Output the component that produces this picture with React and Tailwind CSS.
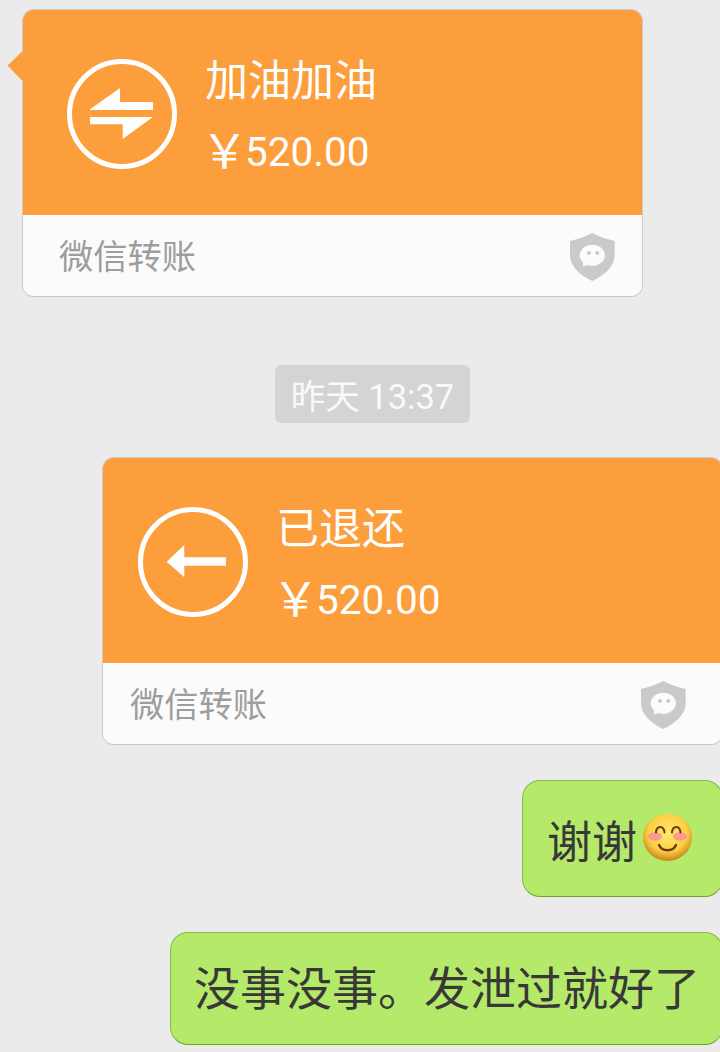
import React from 'react';

const cjk = "font-['Roboto','Noto_Sans_CJK_SC',sans-serif]";

function TransferIcon() {
  return (
    <svg width="110" height="110" viewBox="0 0 110 110" className="shrink-0">
      <circle cx="55" cy="55" r="52.5" fill="none" stroke="#fff" strokeWidth="5" />
      <path d="M23 50.3 53 29V43H86V51H23Z" fill="#fff" />
      <path d="M23 58H86L55.7 80V65.3H23Z" fill="#fff" />
    </svg>
  );
}

function ReturnIcon() {
  return (
    <svg width="110" height="110" viewBox="0 0 110 110" className="shrink-0">
      <circle cx="55" cy="55" r="52.5" fill="none" stroke="#fff" strokeWidth="5" />
      <path d="M28.7 54.7 46.3 38V50.3H88V58.7H46.3V70.3Z" fill="#fff" />
    </svg>
  );
}

function ShieldIcon() {
  return (
    <svg width="45" height="48" viewBox="0 0 45 48" className="mt-[3px]">
      <path d="M22.3 0C29 3.5 37 6.5 44.7 8V22C44.7 34 33 43 22.3 48 11.5 43 0 34 0 22V8C7.5 6.5 15.5 3.5 22.3 0Z" fill="#cacaca" />
      <ellipse cx="22.3" cy="22.3" rx="12.6" ry="10.6" fill="#fbfbfb" />
      <path d="M13 27 13.2 33.5 20 31Z" fill="#fbfbfb" />
      <circle cx="19" cy="20" r="2" fill="#cacaca" />
      <circle cx="27.3" cy="20" r="2" fill="#cacaca" />
    </svg>
  );
}

function SmileEmoji() {
  return (
    <svg width="49" height="47" viewBox="0 0 49 47" className="shrink-0 -mt-[2px]">
      <defs>
        <radialGradient id="face" cx="50%" cy="40%" r="58%">
          <stop offset="0%" stopColor="#ffe872" />
          <stop offset="68%" stopColor="#fcd044" />
          <stop offset="100%" stopColor="#cf8a1e" />
        </radialGradient>
      </defs>
      <ellipse cx="24.5" cy="23.5" rx="24.5" ry="23.5" fill="url(#face)" />
      <ellipse cx="12" cy="22.5" rx="7" ry="4.2" fill="#fb9a8e" />
      <ellipse cx="37" cy="22.5" rx="7" ry="4.2" fill="#fb9a8e" />
      <path d="M13 18.5C13.5 11 21 11 21.5 18.5" fill="none" stroke="#6b3a10" strokeWidth="2" strokeLinecap="round" />
      <path d="M29 18.5C29.5 11 37 11 37.5 18.5" fill="none" stroke="#6b3a10" strokeWidth="2" strokeLinecap="round" />
      <path d="M16 31C19 38 30 38 33 31" fill="none" stroke="#6b3a10" strokeWidth="2.4" strokeLinecap="round" />
    </svg>
  );
}

function TransferCard({ icon, title, tail, className, headClass, footClass, gapClass }) {
  return (
    <div className={`relative w-[621px] shrink-0 ${className}`}>
      {tail && (
        <svg width="16" height="30" viewBox="0 0 16 30" className="absolute left-[-15px] top-[42px]">
          <path d="M15 2 2 14.5 15 28Z" fill="#fb9e3b" stroke="#fb9e3b" strokeWidth="2" strokeLinejoin="round" />
        </svg>
      )}
      <div className="rounded-[12px] overflow-hidden border border-[#cbcbcb] border-b-[#c4c4c4]">
        <div className={`h-[206px] bg-[#fb9e3b] flex items-start pt-[50px] -mt-px ${headClass} ${gapClass}`}>
          {icon}
          <div className={`flex flex-col text-white ${cjk}`}>
            <div className="text-[43px] leading-[56px] -mt-[6px]">{title}</div>
            <div className="text-[40.5px] leading-[56px] mt-[15px] -ml-[4px] flex items-baseline">
              <span className="text-[47px] leading-none -mr-[3px] relative top-[2px]">￥</span>
              <span>520.00</span>
            </div>
          </div>
        </div>
        <div className={`h-[81px] bg-[#fbfbfb] flex items-center justify-between text-[34.25px] text-[#9d9d9d] ${cjk} ${footClass}`}>
          <span className="leading-none mt-[4px]">微信转账</span>
          <ShieldIcon />
        </div>
      </div>
    </div>
  );
}

export default function App() {
  return (
    <div className="w-[720px] h-[1052px] overflow-hidden bg-[#ebebeb] flex flex-col items-start pt-[9px]">
      <TransferCard
        tail
        icon={<TransferIcon />}
        title="加油加油"
        className="ml-[22px]"
        headClass="pl-[44px]"
        gapClass="gap-[28px]"
        footClass="pl-[36px] pr-[27px]"
      />

      <div className={`ml-[275px] mt-[68px] w-[195px] h-[58px] rounded-[6px] bg-[#d4d4d4] flex items-center justify-center text-[34.5px] text-[#f9f9f9] ${cjk}`}>
        <span className="mt-[7px]">昨天 13:37</span>
      </div>

      <TransferCard
        icon={<ReturnIcon />}
        title="已退还"
        className="ml-[102px] mt-[34px]"
        headClass="pl-[35px]"
        gapClass="gap-[28px]"
        footClass="pl-[27px] pr-[36px]"
      />

      <div className="mt-[35px] ml-[522px] w-[201px] h-[117px] shrink-0 rounded-[18px] border border-[#85bd45] border-b-[#6ea52a] bg-[#b4e969] flex items-center pl-[24px] gap-[6px]">
        <span className={`text-[45px] leading-none text-[#383838] mt-[10px] ${cjk}`}>谢谢</span>
        <SmileEmoji />
      </div>

      <div className="mt-[35px] ml-[170px] w-[553px] h-[113px] shrink-0 rounded-[18px] border border-[#85bd45] border-b-[#6ea52a] bg-[#b4e969] flex items-center pl-[23px]">
        <span className={`text-[46px] leading-none whitespace-nowrap text-[#383838] ${cjk}`}>没事没事。发泄过就好了</span>
      </div>
    </div>
  );
}
